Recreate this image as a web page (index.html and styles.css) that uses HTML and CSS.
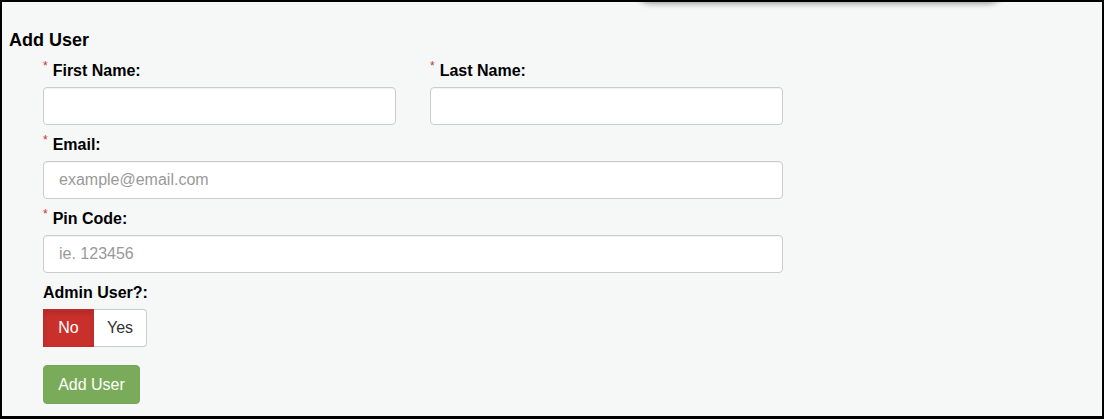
FILE: index.html
```html
<!DOCTYPE html>
<html>
<head>
<meta charset="utf-8">
<link rel="stylesheet" href="styles.css">
</head>
<body>
<div class="frame">
  <div class="top-shadow"></div>
  <h3 class="title">Add User</h3>
  <form class="form">
    <div class="row-2">
      <div class="group">
        <label class="label"><span class="req">*</span>First Name:</label>
        <input class="input" type="text">
      </div>
      <div class="group">
        <label class="label"><span class="req">*</span>Last Name:</label>
        <input class="input" type="text">
      </div>
    </div>
    <div class="group">
      <label class="label"><span class="req">*</span>Email:</label>
      <input class="input" type="text" placeholder="example@email.com">
    </div>
    <div class="group">
      <label class="label"><span class="req">*</span>Pin Code:</label>
      <input class="input" type="text" placeholder="ie. 123456">
    </div>
    <div class="group group-admin">
      <label class="label">Admin User?:</label>
      <div class="toggle">
        <button type="button" class="tbtn tbtn-no">No</button>
        <button type="button" class="tbtn tbtn-yes">Yes</button>
      </div>
    </div>
    <button type="button" class="submit">Add User</button>
  </form>
</div>
</body>
</html>
```

FILE: styles.css
```css
* { box-sizing: border-box; }
html, body { margin: 0; padding: 0; }
body {
  font-family: "Liberation Sans", Arial, sans-serif;
  color: #000;
}
.frame {
  position: relative;
  overflow: hidden;
  height: 419px;
  border: 2px solid #000;
  border-bottom-width: 3px;
  background: #f6f7f7;
  padding: 28px 0 0 7px;
}
.top-shadow {
  position: absolute;
  top: -20px;
  left: 630px;
  width: 375px;
  height: 20px;
  background: #f6f7f7;
  box-shadow: 0 1px 6px rgba(0,0,0,0.45);
  border-radius: 0 0 30px 30px;
}
.title {
  margin: 0;
  font-size: 18px;
  line-height: 20px;
  font-weight: bold;
}
.form {
  margin: 10px 0 0 34px;
  width: 740px;
}
.row-2 {
  display: grid;
  grid-template-columns: 353px 353px;
  column-gap: 34px;
}
.group {
  display: flex;
  flex-direction: column;
  margin-bottom: 9px;
}
.label {
  display: block;
  font-size: 16px;
  font-weight: bold;
  line-height: 22px;
  margin-bottom: 5px;
}
.req {
  display: inline-block;
  vertical-align: top;
  font-size: 12px;
  line-height: 12px;
  font-weight: normal;
  color: #c9302c;
  margin-right: 5px;
}
.input {
  display: block;
  width: 100%;
  height: 38px;
  margin: 0;
  padding: 0 15px;
  border: 1px solid #ccc;
  border-radius: 4px;
  background: #fff;
  font-family: "Liberation Sans", Arial, sans-serif;
  font-size: 16px;
  color: #333;
  box-shadow: inset 0 1px 1px rgba(0,0,0,0.05);
}
.input::placeholder { color: #999; }
.group-admin { margin-bottom: 18px; }
.toggle {
  display: flex;
}
.tbtn {
  height: 38px;
  margin: 0;
  padding: 0;
  font-family: "Liberation Sans", Arial, sans-serif;
  font-size: 16px;
  border: 1px solid #ccc;
  cursor: pointer;
}
.tbtn-no {
  width: 51px;
  background: #c9302c;
  border-color: #c42c27;
  color: #fff;
  border-radius: 0;
  box-shadow: inset 0 3px 5px rgba(0,0,0,0.125);
}
.tbtn-yes {
  width: 53px;
  background: #fff;
  color: #333;
  border-left: 0;
  border-radius: 0 4px 4px 0;
}
.submit {
  display: block;
  width: 97px;
  height: 39px;
  margin: 0;
  padding: 0;
  border: 1px solid #76a956;
  border-radius: 4px;
  background: #7aab5a;
  color: #fff;
  font-family: "Liberation Sans", Arial, sans-serif;
  font-size: 16px;
  cursor: pointer;
}
```
